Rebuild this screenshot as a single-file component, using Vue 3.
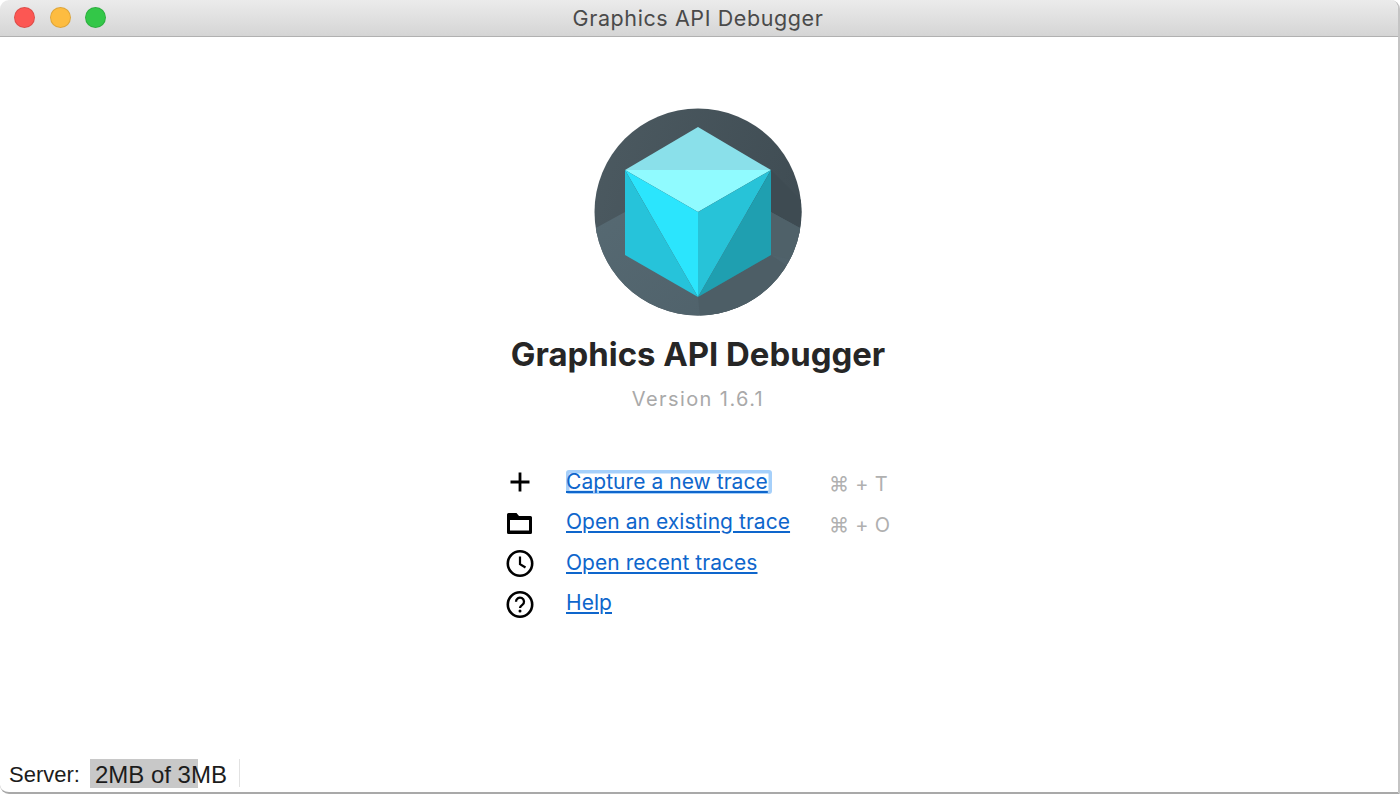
<script setup>
const items = [
  { id: 'plus', label: 'Capture a new trace', key: 'T', focused: true },
  { id: 'folder', label: 'Open an existing trace', key: 'O' },
  { id: 'clock', label: 'Open recent traces' },
  { id: 'help', label: 'Help' },
]
</script>

<template>
  <div class="window">
    <header class="titlebar">
      <div class="lights">
        <span class="light red"></span>
        <span class="light yellow"></span>
        <span class="light green"></span>
      </div>
      <span class="wintitle">Graphics API Debugger</span>
    </header>

    <main class="content">
      <svg class="logo" viewBox="594 108 208 208" width="208" height="208">
        <defs>
          <clipPath id="disc"><circle cx="698" cy="212" r="103.5" /></clipPath>
          <linearGradient id="sky" x1="0" y1="0" x2="1" y2="0.3">
            <stop offset="0" stop-color="#4c5a61" />
            <stop offset="1" stop-color="#404d54" />
          </linearGradient>
          <linearGradient id="ground" x1="0" y1="0" x2="1" y2="0.6">
            <stop offset="0" stop-color="#566972" />
            <stop offset="1" stop-color="#4f616a" />
          </linearGradient>
        </defs>
        <g clip-path="url(#disc)">
          <rect x="594" y="108" width="208" height="208" fill="url(#sky)" />
          <path d="M594 229 L625 212 H771 L802 229 V316 H594 Z" fill="url(#ground)" />
          <path d="M771 170 L802 201 V229 L771 212 Z" fill="#3e4b52" />
          <path d="M771 212 L802 229 V262 L771 255 Z" fill="#4f6169" />
          <path d="M698 297 L771 255 L790 268 L735 316 H700 Z" fill="#4d5e66" />
        </g>
        <path d="M698 127 L771 170 H625 Z" fill="#8ae0ea" />
        <path d="M625 170 H771 L698 212 Z" fill="#90fbff" />
        <path d="M625 170 L698 212 V297 Z" fill="#2be5fd" />
        <path d="M625 170 L698 297 L625 255 Z" fill="#26c3da" />
        <path d="M771 170 L698 212 V297 Z" fill="#27c3d8" />
        <path d="M771 170 V255 L698 297 Z" fill="#1f9fb0" />
      </svg>

      <h1 class="title">Graphics API Debugger</h1>
      <p class="version">Version 1.6.1</p>

      <ul class="menu">
        <li v-for="item in items" :key="item.id" class="row">
          <span class="icon">
            <svg v-if="item.id === 'plus'" viewBox="0 0 28 28" width="28" height="28">
              <path d="M14 4.5 V23.5 M4.5 14 H23.5" stroke="#000" stroke-width="2.8" fill="none" />
            </svg>
            <svg v-else-if="item.id === 'folder'" viewBox="0 0 28 28" width="28" height="28">
              <path fill-rule="evenodd" d="M1 5.5 Q1 4 2.5 4 H10.5 L13 7 H24.5 Q26 7 26 8.5 V23.5 Q26 25 24.5 25 H2.5 Q1 25 1 23.5 Z M4 11 V21.6 H23 V11 Z" fill="#000" />
            </svg>
            <svg v-else-if="item.id === 'clock'" viewBox="0 0 28 28" width="28" height="28">
              <circle cx="14" cy="14.5" r="12.2" stroke="#000" stroke-width="2.6" fill="none" />
              <path d="M14 7.5 V15.2 L19.5 18.5" stroke="#000" stroke-width="2.2" fill="none" />
            </svg>
            <svg v-else viewBox="0 0 28 28" width="28" height="28">
              <circle cx="14" cy="14.5" r="12.2" stroke="#000" stroke-width="2.6" fill="none" />
              <path d="M10 11.7 A4 4 0 1 1 16.3 14.9 C14.7 16 14 16.5 14 18.1" stroke="#000" stroke-width="2.3" fill="none" />
              <circle cx="14" cy="20.9" r="1.5" fill="#000" />
            </svg>
          </span>
          <a class="link" :class="{ focused: item.focused }" href="#">{{ item.label }}</a>
          <span v-if="item.key" class="shortcut">⌘ + {{ item.key }}</span>
        </li>
      </ul>
    </main>

    <footer class="status">
      <span class="server">Server:</span>
      <span class="memory">
        <span class="memfill"></span>
        <span class="memtext">2MB of 3MB</span>
      </span>
      <span class="divider"></span>
    </footer>

    <span class="peek blue"></span>
    <span class="peek mark1"></span>
    <span class="peek mark2"></span>
  </div>
</template>

<style>
html, body { margin: 0; background: #fff; }
</style>

<style scoped>
.window {
  position: relative;
  width: 1400px;
  height: 794px;
  box-sizing: border-box;
  display: flex;
  flex-direction: column;
  overflow: hidden;
  background: #fff;
  font-family: Inter, "Liberation Sans", sans-serif;
  border-right: 2px solid #c4c4c4;
  border-bottom: 2px solid #a9a9a9;
  border-radius: 9px 9px 0 9px;
}
.titlebar {
  position: relative;
  flex: none;
  height: 37px;
  box-sizing: border-box;
  display: flex;
  align-items: center;
  justify-content: center;
  background: linear-gradient(#ebebeb, #d5d5d5);
  border-bottom: 1px solid #b1b1b1;
}
.lights {
  position: absolute;
  left: 14px;
  top: 7px;
  display: flex;
  gap: 14.5px;
}
.light {
  width: 21px;
  height: 21px;
  box-sizing: border-box;
  border-radius: 50%;
  border: 1px solid rgba(0, 0, 0, 0.12);
}
.red { background: #fc5753; }
.yellow { background: #fdbc40; }
.green { background: #33c748; }
.wintitle {
  font-size: 21.5px;
  letter-spacing: 0.6px;
  color: #4a4a4a;
  margin-left: -2px;
}
.content {
  flex: 1;
  min-height: 0;
  display: flex;
  flex-direction: column;
  align-items: center;
  padding: 71px 2px 0 0;
}
.logo { display: block; flex: none; }
.title {
  margin: 16px 0 0;
  font-size: 32.9px;
  line-height: 44px;
  font-weight: 700;
  color: #262626;
}
.version {
  margin: 8px 0 0;
  font-size: 20px;
  letter-spacing: 1.4px;
  line-height: 30px;
  color: #a9a9a9;
}
.menu {
  list-style: none;
  margin: 48px 0 0;
  padding: 0;
  width: 384px;
  display: flex;
  flex-direction: column;
}
.row {
  height: 40.6px;
  display: grid;
  grid-template-columns: 28px 1fr auto;
  column-gap: 32px;
  align-items: center;
}
.icon { display: flex; width: 28px; height: 28px; }
.link {
  justify-self: start;
  font-size: 21px;
  letter-spacing: 0.05px;
  line-height: 24px;
  color: #0e66cc;
  text-decoration: underline;
  text-underline-offset: 2px;
  margin-top: -1.5px;
}
.focused {
  border-radius: 3px;
  padding-right: 4px;
  margin-right: -4px;
  box-shadow: inset 0 0 0 3.5px #a6d0fa;
}
.shortcut {
  font-size: 20px;
  letter-spacing: 0.3px;
  color: #b0b0b0;
  width: 61px;
  white-space: nowrap;
  margin-top: 4px;
}
.status {
  flex: none;
  height: 36px;
  box-sizing: border-box;
  display: flex;
  align-items: center;
  padding-left: 9px;
  font-family: "Liberation Sans", Arial, sans-serif;
  font-size: 22px;
  color: #1c1c1c;
  padding-bottom: 2px;
}
.server { margin-right: 10px; padding-top: 3px; }
.memory {
  position: relative;
  display: block;
  padding: 2px 3px 0 5px;
  height: 29px;
  box-sizing: border-box;
  line-height: 28px;
  font-size: 24px;
}
.memfill {
  position: absolute;
  left: 0;
  top: 0;
  bottom: 0;
  width: 108px;
  background: #c8c8c8;
}
.memtext { position: relative; }
.divider {
  width: 1px;
  height: 28px;
  margin-left: 9px;
  background: #e2e2e2;
}
.peek {
  position: absolute;
  right: -2px;
  width: 2px;
}
.blue { top: 38px; height: 20px; background: #4b84c4; }
.mark1 { top: 146px; height: 16px; background: #333; }
.mark2 { top: 288px; height: 18px; background: #444; }
</style>
